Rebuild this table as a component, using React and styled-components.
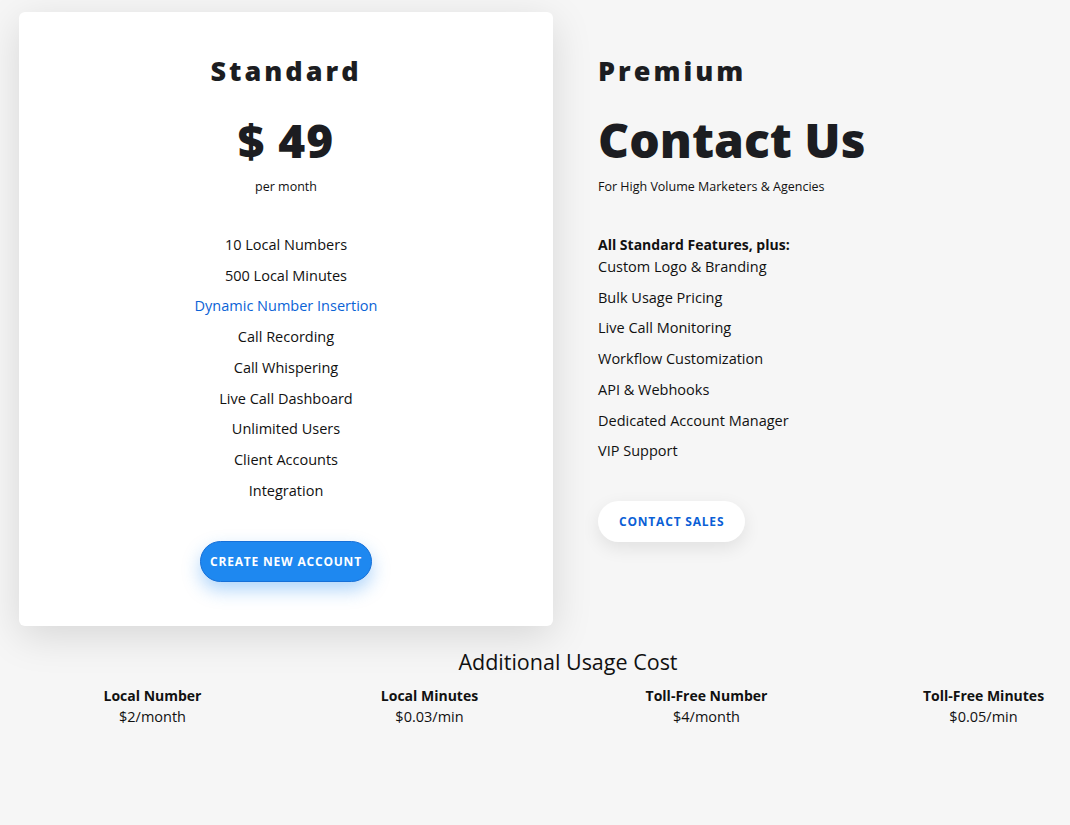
import styled, { createGlobalStyle } from "styled-components";

const Global = createGlobalStyle`
  html, body {
    margin: 0;
    background: #f6f6f6;
    overflow: hidden;
  }
  body {
    font-family: "Open Sans", "Noto Sans", sans-serif;
    color: #1c1d21;
  }
`;

const Page = styled.div`
  width: 1108px;
  margin-left: 14px;
  padding-top: 12px;
`;

const Plans = styled.div`
  display: flex;
  align-items: flex-start;
  padding-left: 5px;
  gap: 45px;
`;

const Card = styled.div`
  width: 534px;
  box-sizing: border-box;
  background: #fff;
  border-radius: 6px;
  box-shadow: 0 10px 40px rgba(0, 0, 0, 0.13);
  display: flex;
  flex-direction: column;
  align-items: center;
  padding: 42px 0 44px;
`;

const Side = styled.div`
  display: flex;
  flex-direction: column;
  align-items: flex-start;
  padding-top: 42px;
`;

const PlanName = styled.h2`
  margin: 0;
  font-size: 27px;
  line-height: 34px;
  font-weight: 800;
  letter-spacing: 3px;
  color: #1c1d21;
`;

const Price = styled.div`
  margin-top: 22px;
  font-size: ${(p) => (p.$big ? "48px" : "46px")};
  line-height: 60px;
  font-weight: 800;
  letter-spacing: ${(p) => (p.$big ? "0" : "1px")};
  color: #1c1d21;
`;

const Sub = styled.div`
  margin-top: 8px;
  font-size: 12.5px;
  line-height: 18px;
  color: #111;
`;

const List = styled.ul`
  list-style: none;
  margin: ${(p) => (p.$side ? "0" : "34px 0 0")};
  padding: 0;
  display: flex;
  flex-direction: column;
  align-items: ${(p) => (p.$side ? "flex-start" : "center")};
`;

const Item = styled.li`
  font-size: 14.5px;
  line-height: 30.7px;
  color: ${(p) => (p.$link ? "#0b63d6" : "#111")};
`;

const Lead = styled.div`
  margin-top: 42px;
  font-size: 14px;
  font-weight: 700;
  line-height: 14px;
  color: #111;
`;

const Button = styled.button`
  margin-top: ${(p) => (p.$light ? "34px" : "35px")};
  height: 41px;
  padding: 0 ${(p) => (p.$light ? "21px" : "9px")};
  border-radius: 21px;
  border: ${(p) => (p.$light ? "none" : "1px solid #1670d8")};
  background: ${(p) => (p.$light ? "#fff" : "#1e88f0")};
  color: ${(p) => (p.$light ? "#0b5fd6" : "#fff")};
  font-family: inherit;
  font-size: 12px;
  font-weight: 700;
  letter-spacing: 0.8px;
  box-shadow: ${(p) =>
    p.$light
      ? "0 6px 18px rgba(0, 0, 0, 0.09)"
      : "0 8px 18px rgba(30, 136, 240, 0.35)"};
  cursor: pointer;
`;

const Usage = styled.section`
  margin-top: 22px;
  text-align: center;
`;

const UsageTitle = styled.h3`
  margin: 0;
  font-size: 21.5px;
  font-weight: 400;
  line-height: 28px;
  color: #111;
`;

const UsageGrid = styled.div`
  margin-top: 10px;
  display: grid;
  grid-template-columns: repeat(4, 1fr);
`;

const UsageCell = styled.div`
  display: flex;
  flex-direction: column;
  align-items: center;
`;

const UsageLabel = styled.div`
  font-size: 14px;
  font-weight: 700;
  line-height: 20px;
  color: #111;
`;

const UsageValue = styled.div`
  font-size: 14.5px;
  line-height: 22px;
  color: #111;
`;

const standard = [
  "10 Local Numbers",
  "500 Local Minutes",
  "Dynamic Number Insertion",
  "Call Recording",
  "Call Whispering",
  "Live Call Dashboard",
  "Unlimited Users",
  "Client Accounts",
  "Integration",
];

const premium = [
  "Custom Logo & Branding",
  "Bulk Usage Pricing",
  "Live Call Monitoring",
  "Workflow Customization",
  "API & Webhooks",
  "Dedicated Account Manager",
  "VIP Support",
];

const usage = [
  ["Local Number", "$2/month"],
  ["Local Minutes", "$0.03/min"],
  ["Toll-Free Number", "$4/month"],
  ["Toll-Free Minutes", "$0.05/min"],
];

export default function App() {
  return (
    <Page>
      <Global />
      <Plans>
        <Card>
          <PlanName>Standard</PlanName>
          <Price>$ 49</Price>
          <Sub>per month</Sub>
          <List>
            {standard.map((s) => (
              <Item key={s} $link={s === "Dynamic Number Insertion"}>
                {s}
              </Item>
            ))}
          </List>
          <Button>CREATE NEW ACCOUNT</Button>
        </Card>
        <Side>
          <PlanName>Premium</PlanName>
          <Price $big>Contact Us</Price>
          <Sub>For High Volume Marketers &amp; Agencies</Sub>
          <Lead>All Standard Features, plus:</Lead>
          <List $side>
            {premium.map((s) => (
              <Item key={s}>{s}</Item>
            ))}
          </List>
          <Button $light>CONTACT SALES</Button>
        </Side>
      </Plans>
      <Usage>
        <UsageTitle>Additional Usage Cost</UsageTitle>
        <UsageGrid>
          {usage.map(([l, v]) => (
            <UsageCell key={l}>
              <UsageLabel>{l}</UsageLabel>
              <UsageValue>{v}</UsageValue>
            </UsageCell>
          ))}
        </UsageGrid>
      </Usage>
    </Page>
  );
}
